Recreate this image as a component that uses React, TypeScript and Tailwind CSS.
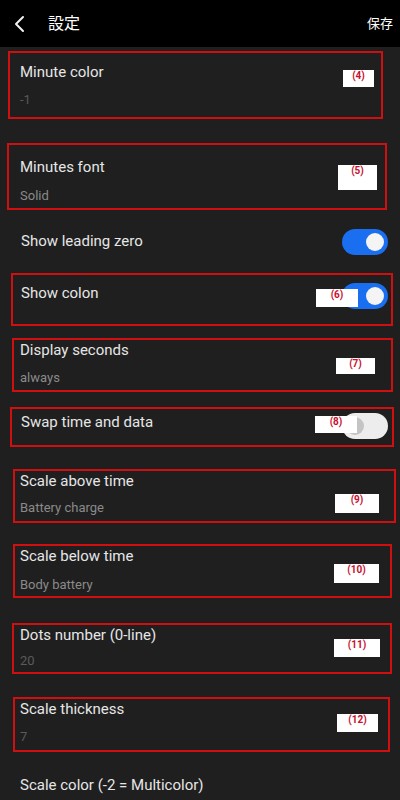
import React from 'react'

const font = { fontFamily: 'Roboto, "Noto Sans CJK JP", sans-serif' }

function Tag({ text, className }: { text: string; className: string }) {
  return (
    <div className={`absolute bg-white text-[#c8102e] text-[10px] leading-[12px] font-bold text-center ${className}`}>
      {text}
    </div>
  )
}

function Toggle({ on }: { on: boolean }) {
  if (on) {
    return (
      <div className="w-[46px] h-[26px] rounded-full bg-[#1a6ef0] flex items-center justify-end pr-[4px] shrink-0">
        <div className="w-[18px] h-[18px] rounded-full bg-[#f4f4f4]" />
      </div>
    )
  }
  return (
    <div className="w-[46px] h-[26px] rounded-full bg-[#ededed] flex items-center pl-[4px] shrink-0">
      <div className="w-[18px] h-[18px] rounded-full bg-[#c4c4c4]" />
    </div>
  )
}

export default function App() {
  return (
    <div className="w-[400px] h-[800px] overflow-hidden bg-[#1f1f1f] text-[#e6e6e6]" style={font}>
      {/* header */}
      <div className="h-[47px] bg-black flex items-center">
        <svg width="14" height="18" viewBox="0 0 14 18" className="ml-[12px]">
          <path d="M11 2 L4 9 L11 16" fill="none" stroke="#f2f2f2" strokeWidth="2" strokeLinecap="round" strokeLinejoin="round" />
        </svg>
        <span className="ml-[22px] text-[16px] leading-[20px] text-white">設定</span>
        <span className="ml-auto mr-[7px] text-[13px] leading-[16px] text-white">保存</span>
      </div>

      {/* Minute color */}
      <div className="relative mt-[4px] ml-[8px] w-[375px] h-[68px] border-2 border-[#d01010] pl-[10px] pt-[9px]">
        <div className="text-[15px] leading-[20px]">Minute color</div>
        <div className="mt-[9px] text-[13px] leading-[18px] text-[#5a5a5a]">-1</div>
        <Tag text="(4)" className="left-[333px] top-[17px] w-[31px] h-[17px]" />
      </div>

      {/* Minutes font */}
      <div className="relative mt-[24px] ml-[7px] w-[380px] h-[67px] border-2 border-[#d01010] pl-[11px] pt-[12px]">
        <div className="text-[15px] leading-[20px]">Minutes font</div>
        <div className="mt-[10px] text-[13px] leading-[18px] text-[#8a8a8a]">Solid</div>
        <Tag text="(5)" className="left-[329px] top-[20px] w-[39px] h-[25px]" />
      </div>

      {/* Show leading zero */}
      <div className="mt-[19px] h-[26px] flex items-center pl-[21px] pr-[12px]">
        <span className="text-[15px] leading-[20px] -mt-[3px]">Show leading zero</span>
        <div className="ml-auto">
          <Toggle on />
        </div>
      </div>

      {/* Show colon */}
      <div className="relative mt-[18px] ml-[11px] w-[382px] h-[53px] border-2 border-[#d01010] pl-[8px] pr-[3px] pt-[8px] flex items-start">
        <span className="text-[15px] leading-[20px]">Show colon</span>
        <div className="ml-auto">
          <Toggle on />
        </div>
        <Tag text="(6)" className="left-[303px] top-[14px] w-[42px] h-[18px]" />
      </div>

      {/* Display seconds */}
      <div className="relative mt-[12px] ml-[12px] w-[381px] h-[54px] border-2 border-[#d01010] pl-[6px]">
        <div className="text-[15px] leading-[20px]">Display seconds</div>
        <div className="mt-[9px] text-[13px] leading-[18px] text-[#8a8a8a]">always</div>
        <Tag text="(7)" className="left-[322px] top-[18px] w-[39px] h-[16px]" />
      </div>

      {/* Swap time and data */}
      <div className="relative mt-[15px] ml-[10px] w-[384px] h-[40px] border-2 border-[#d01010] pl-[9px] pr-[4px] pt-[3px] flex items-start">
        <span className="text-[15px] leading-[20px]">Swap time and data</span>
        <div className="ml-auto mt-[1px]">
          <Toggle on={false} />
        </div>
        <Tag text="(8)" className="left-[303px] top-[7px] w-[42px] h-[17px]" />
      </div>

      {/* Scale above time */}
      <div className="relative mt-[22px] ml-[13px] w-[383px] h-[54px] border-2 border-[#d01010] pl-[5px]">
        <div className="text-[15px] leading-[20px]">Scale above time</div>
        <div className="mt-[8px] text-[13px] leading-[18px] text-[#8a8a8a]">Battery charge</div>
        <Tag text="(9)" className="left-[320px] top-[23px] w-[44px] h-[19px]" />
      </div>

      {/* Scale below time */}
      <div className="relative mt-[21px] ml-[13px] w-[379px] h-[54px] border-2 border-[#d01010] pl-[5px]">
        <div className="text-[15px] leading-[20px]">Scale below time</div>
        <div className="mt-[10px] text-[13px] leading-[18px] text-[#8a8a8a]">Body battery</div>
        <Tag text="(10)" className="left-[319px] top-[18px] w-[45px] h-[19px]" />
      </div>

      {/* Dots number */}
      <div className="relative mt-[25px] ml-[12px] w-[380px] h-[51px] border-2 border-[#d01010] pl-[6px]">
        <div className="text-[15px] leading-[20px]">Dots number (0-line)</div>
        <div className="mt-[7px] text-[13px] leading-[18px] text-[#5a5a5a]">20</div>
        <Tag text="(11)" className="left-[320px] top-[14px] w-[46px] h-[18px]" />
      </div>

      {/* Scale thickness */}
      <div className="relative mt-[23px] ml-[13px] w-[377px] h-[55px] border-2 border-[#d01010] pl-[5px]">
        <div className="text-[15px] leading-[20px]">Scale thickness</div>
        <div className="mt-[9px] text-[13px] leading-[18px] text-[#5a5a5a]">7</div>
        <Tag text="(12)" className="left-[322px] top-[15px] w-[41px] h-[18px]" />
      </div>

      <div className="mt-[23px] pl-[20px] text-[15px] leading-[20px]">Scale color (-2 = Multicolor)</div>
    </div>
  )
}
